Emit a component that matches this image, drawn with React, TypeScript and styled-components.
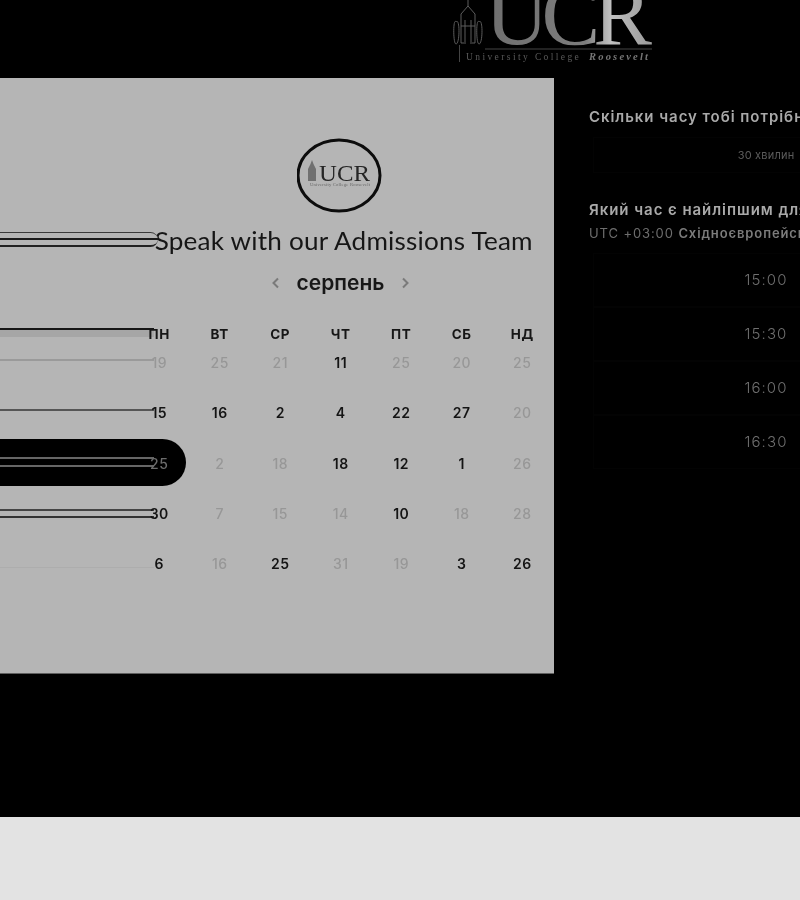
import React from 'react'
import styled, { createGlobalStyle } from 'styled-components'

const GlobalStyle = createGlobalStyle`
  html, body {
    margin: 0;
    padding: 0;
    background: #e3e3e3;
  }
`

const Page = styled.div`
  width: 800px;
  height: 900px;
  overflow: hidden;
  display: flex;
  flex-direction: column;
  font-family: Inter, "Liberation Sans", sans-serif;
`

const Dark = styled.div`
  height: 817px;
  background: #000;
  flex: none;
  overflow: hidden;
`

const Header = styled.header`
  height: 78px;
  overflow: hidden;
  padding-left: 452px;
  filter: blur(0.4px);
`

const Columns = styled.div`
  display: flex;
  width: 1100px;
`

const Panel = styled.section`
  position: relative;
  box-sizing: border-box;
  width: 554px;
  height: 596px;
  flex: none;
  background: #b5b5b5;
  border-bottom: 1px solid #5f5f5f;
  padding: 60px 1px 0 129px;
  color: #111;
  overflow: hidden;
`

const Scheduler = styled.div`
  display: flex;
  flex-direction: column;
  align-items: center;
  filter: blur(0.4px);
`

const Title = styled.h1`
  margin: 12px 0 0 6px;
  font: 400 24.4px/30px Lato, sans-serif;
  letter-spacing: 0.2px;
  white-space: nowrap;
  color: #161616;
  transform: scaleX(1.07);
`

const MonthRow = styled.div`
  display: flex;
  align-items: center;
  gap: 16px;
  margin: 12px 1px 0 0;
  height: 30px;
`

const Month = styled.span`
  font: 600 21px/24px Inter, sans-serif;
  color: #171717;
`

const Chevron = styled.svg`
  width: 10px;
  height: 12px;
  fill: none;
  stroke: #7a7a7a;
  stroke-width: 2;
`

const Grid = styled.div`
  display: grid;
  width: 424px;
  grid-template-columns: repeat(7, 60.5px);
  grid-auto-rows: 50.3px;
  margin-top: 11px;
`

const HeadRow = styled.div`
  display: grid;
  width: 424px;
  grid-template-columns: repeat(7, 60.5px);
  margin-top: 28px;
  height: 16px;
`

const HeadCell = styled.span`
  position: relative;
  text-align: center;
  font: 700 13.5px/16px Inter, sans-serif;
  letter-spacing: 0.6px;
  color: #161616;
`

const Day = styled.span<{ $on?: boolean; $picked?: boolean }>`
  position: relative;
  display: flex;
  align-items: center;
  justify-content: center;
  height: 20px;
  font: ${p => (p.$on ? 600 : 500)} 14px/20px Inter, sans-serif;
  letter-spacing: 0.5px;
  color: ${p => (p.$picked ? '#6c6c6c' : p.$on ? '#141414' : '#979797')};
`

const CellText = styled.span`
  position: relative;
`

const Pill = styled.div`
  position: absolute;
  right: 4px;
  top: -15px;
  width: 260px;
  height: 47px;
  background: #000;
  border-radius: 0 24px 24px 0;
`

/* stray rule lines left over on the cropped first column */
const Rule = styled.i<{ $top: number; $h?: number; $color: string }>`
  position: absolute;
  right: 35.5px;
  width: 260px;
  top: ${p => p.$top}px;
  height: ${p => p.$h ?? 2}px;
  background: ${p => p.$color};
`

const TitleRules = styled.div`
  position: absolute;
  z-index: 1;
  left: 0;
  top: 154px;
  width: 158px;
  height: 15px;
  box-sizing: border-box;
  border-top: 1px solid #3a3a3a;
  border-bottom: 2px solid #222;
  border-radius: 0 8px 8px 0;
  background: linear-gradient(#b5b5b5 5px, #1a1a1a 5px, #1a1a1a 7px, #b5b5b5 7px);
  filter: blur(0.4px);
`

const Side = styled.aside`
  width: 400px;
  flex: none;
  padding: 29px 0 0 35px;
  filter: blur(0.3px);
`

const Question = styled.h2`
  margin: 0;
  font: 600 15px/20px Inter, sans-serif;
  letter-spacing: 0.95px;
  white-space: nowrap;
  color: #a9a9a9;
`

const Slot = styled.div<{ $small?: boolean }>`
  box-sizing: border-box;
  width: 346px;
  height: ${p => (p.$small ? 36 : 54)}px;
  margin-left: 4px;
  display: flex;
  align-items: center;
  justify-content: center;
  border: 1px solid #030303;
  color: ${p => (p.$small ? '#5c5c5c' : '#6f6f6f')};
  font: ${p => (p.$small ? '400 11px' : '300 15px')}/20px Inter, sans-serif;
  letter-spacing: ${p => (p.$small ? '0.2px' : '1.1px')};
`

const Duration = styled.div`
  margin: 10px 0 0;
`

const TimeGroup = styled.div`
  margin-top: 27px;
`

const Zone = styled.p`
  margin: 3px 0 10px;
  font: 400 13px/20px Inter, sans-serif;
  letter-spacing: 0.9px;
  white-space: nowrap;
  color: #6e6e6e;
`

const ZoneName = styled.span`
  font-weight: 600;
  color: #7c7c7c;
`

const Footer = styled.div`
  flex: 1;
  background: #e3e3e3;
`

const UcrLogo = () => (
  <svg width="210" height="68" viewBox="0 0 210 68">
    <defs>
      <linearGradient id="ucrFade" x1="0" x2="1" y1="0" y2="0">
        <stop offset="0" stopColor="#6f6f6f" />
        <stop offset="0.6" stopColor="#7d7d7d" />
        <stop offset="0.75" stopColor="#c0c0c0" />
        <stop offset="1" stopColor="#999" />
      </linearGradient>
    </defs>
    <g fill="none" stroke="#5c5c5c" strokeWidth="1">
      <path d="M16 0L16 6L9 14V43L14 43M16 6L23 14V43L18 43" />
      <path d="M4 22C1 17 1 44 4 44C8 44 8 17 4 22ZM27 22C24 17 24 44 27 44C31 44 31 17 27 22Z" />
      <path d="M13 20V42M19 20V42M9 26H23" />
      <path d="M7.5 45V62M33 49H200" stroke="#444" />
    </g>
    <text x="33" y="44" fontFamily="Liberation Serif" fontSize="88" textLength="167" fill="url(#ucrFade)">
      UCR
    </text>
    <text x="14" y="60" fontFamily="Liberation Serif" fontSize="9.5" letterSpacing="2.4" fill="#5a5a5a">
      University College
    </text>
    <text x="137" y="60" fontFamily="Liberation Serif" fontSize="10.5" fontStyle="italic" fontWeight="700" letterSpacing="2.2" fill="#777">
      Roosevelt
    </text>
  </svg>
)

const Badge = () => (
  <svg width="88" height="76" viewBox="0 0 88 76">
    <ellipse cx="42" cy="37.5" rx="41" ry="35.5" fill="none" stroke="#0c0c0c" strokeWidth="3" />
    <path d="M11 43V31L13.5 26L15 22L16.5 26L19 31V43Z" fill="#707070" />
    <text x="22" y="43" fontFamily="Liberation Serif" fontSize="23" textLength="51" lengthAdjust="spacingAndGlyphs" fill="#262626">
      UCR
    </text>
    <text x="13" y="47.5" fontFamily="Liberation Serif" fontSize="4.6" textLength="60" fill="#666">
      University College Roosevelt
    </text>
  </svg>
)

const heads = ['ПН', 'ВТ', 'СР', 'ЧТ', 'ПТ', 'СБ', 'НД']

// [value, available]
const days: [number, boolean][] = [
  [19, false], [25, false], [21, false], [11, true], [25, false], [20, false], [25, false],
  [15, true], [16, true], [2, true], [4, true], [22, true], [27, true], [20, false],
  [25, false], [2, false], [18, false], [18, true], [12, true], [1, true], [26, false],
  [30, true], [7, false], [15, false], [14, false], [10, true], [18, false], [28, false],
  [6, true], [16, false], [25, true], [31, false], [19, false], [3, true], [26, true],
]

const rowRules: Record<number, { top: number; h?: number; color: string }[]> = {
  0: [{ top: 6, color: '#9a9a9a' }],
  7: [{ top: 6, color: '#555' }],
  14: [{ top: 3, color: '#666' }, { top: 11, color: '#666' }],
  21: [{ top: 5, color: '#444' }, { top: 12, color: '#333' }],
  28: [{ top: 13, h: 1, color: '#adadad' }],
}

const slots = ['15:00', '15:30', '16:00', '16:30']

export default function App() {
  return (
    <Page>
      <GlobalStyle />
      <Dark>
        <Header>
          <UcrLogo />
        </Header>
        <Columns>
          <Panel>
            <TitleRules />
            <Scheduler>
              <Badge />
              <Title>Speak with our Admissions Team</Title>
              <MonthRow>
                <Chevron viewBox="0 0 10 12"><path d="M7 1.5L2.5 6L7 10.5" /></Chevron>
                <Month>серпень</Month>
                <Chevron viewBox="0 0 10 12"><path d="M3 1.5L7.5 6L3 10.5" /></Chevron>
              </MonthRow>
              <HeadRow>
                {heads.map((h, i) => (
                  <HeadCell key={h}>
                    {i === 0 && <Rule $top={4} $h={7} $color="#a6a6a6" />}
                    {i === 0 && <Rule $top={2} $color="#161616" />}
                    <CellText>{h}</CellText>
                  </HeadCell>
                ))}
              </HeadRow>
              <Grid>
                {days.map(([value, on], i) => (
                  <Day key={i} $on={on} $picked={i === 14}>
                    {i === 14 && <Pill />}
                    {(rowRules[i] || []).map((r, j) => (
                      <Rule key={j} $top={r.top} $h={r.h} $color={r.color} />
                    ))}
                    <CellText>{value}</CellText>
                  </Day>
                ))}
              </Grid>
            </Scheduler>
          </Panel>
          <Side>
            <Question>Скільки часу тобі потрібно?</Question>
            <Duration>
              <Slot $small>30 хвилин</Slot>
            </Duration>
            <TimeGroup>
              <Question>Який час є найліпшим для вас?</Question>
              <Zone>UTC +03:00 <ZoneName>Східноєвропейський час</ZoneName></Zone>
              {slots.map(s => (
                <Slot key={s}>{s}</Slot>
              ))}
            </TimeGroup>
          </Side>
        </Columns>
      </Dark>
      <Footer />
    </Page>
  )
}
